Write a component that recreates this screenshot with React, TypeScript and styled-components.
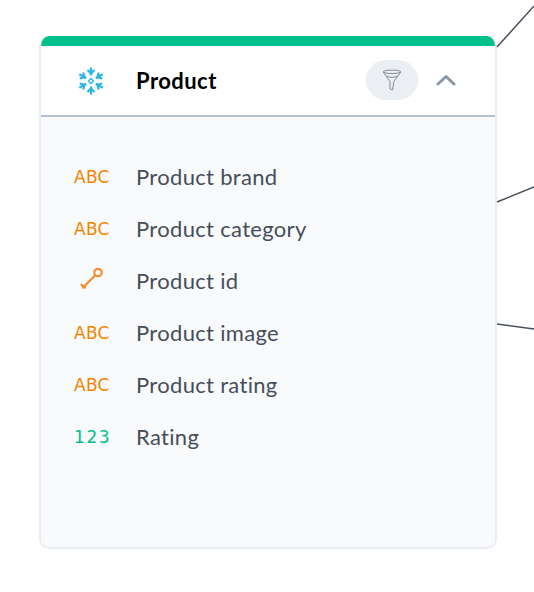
import React from "react";
import styled, { createGlobalStyle } from "styled-components";

const GlobalStyle = createGlobalStyle`
  html, body {
    margin: 0;
    padding: 0;
    background: #ffffff;
    font-family: "Lato", "Open Sans", sans-serif;
  }
`;

const Canvas = styled.div`
  position: relative;
  box-sizing: border-box;
  width: 534px;
  height: 592px;
  padding: 36px 37px 43px 39px;
  overflow: hidden;
`;

const Connectors = styled.svg`
  position: absolute;
  left: 0;
  top: 0;
`;

const Card = styled.section`
  box-sizing: border-box;
  height: 100%;
  display: flex;
  flex-direction: column;
  border: 2px solid #e9ecf1;
  border-top: 0;
  border-radius: 10px;
  background: #ffffff;
  overflow: hidden;
`;

const TopBar = styled.div`
  height: 10px;
  background: #00c08b;
  margin: 0 -2px;
`;

const Header = styled.header`
  box-sizing: border-box;
  height: 71px;
  display: flex;
  align-items: center;
  padding: 0 39px 0 36px;
  border-bottom: 2px solid #b8c1cf;
`;

const LogoSlot = styled.div`
  width: 59px;
  display: flex;
`;

const Title = styled.h2`
  flex: 1;
  margin: 0;
  font-size: 22px;
  font-weight: 700;
  letter-spacing: 0.45px;
  color: #000000;
`;

const FilterButton = styled.button`
  width: 52px;
  height: 40px;
  padding: 0;
  margin: 0 18px 1px 0;
  display: flex;
  align-items: center;
  justify-content: center;
  border: 0;
  border-radius: 20px;
  background: #ebeef2;
`;

const Chevron = styled.svg`
  display: block;
  margin-bottom: 2px;
`;

const Body = styled.ul`
  flex: 1;
  margin: 0;
  padding: 33px 0 0 0;
  list-style: none;
  background: #f8fafc;
`;

const Row = styled.li`
  height: 52px;
  display: flex;
  align-items: center;
`;

const TypeSlot = styled.div`
  width: 95px;
  padding-left: 33px;
  box-sizing: border-box;
  display: flex;
  align-items: center;
`;

const TypeLabel = styled.span<{ $color: string; $spacing: number }>`
  margin-top: 1px;
  font-family: "DejaVu Sans", sans-serif;
  font-size: 17px;
  font-weight: 400;
  letter-spacing: ${({ $spacing }) => $spacing}px;
  color: ${({ $color }) => $color};
`;

const FieldName = styled.span`
  font-size: 22px;
  letter-spacing: 0.32px;
  color: #464e5a;
`;

const SnowflakeIcon = () => (
  <svg width="28" height="28" viewBox="0 0 28 28" fill="none" stroke="#29b5e8" strokeWidth="2.2" strokeLinecap="butt" strokeLinejoin="miter">
    {[0, 60, 120, 180, 240, 300].map((angle) => (
      <g key={angle} transform={`rotate(${angle} 14 14)`}>
        <path d="M14 0.5 L14 8.5" />
        <path d="M10.5 3 L14 6.5 L17.5 3" />
      </g>
    ))}
    <path d="M14 11.5 L16.5 14 L14 16.5 L11.5 14 Z" strokeWidth="1.3" />
  </svg>
);

const FunnelIcon = () => (
  <svg width="20" height="22" viewBox="0 0 20 22" fill="none" stroke="#868e9b" strokeWidth="1" strokeLinejoin="round">
    <ellipse cx="10" cy="2.8" rx="8.8" ry="1.7" />
    <path d="M1.2 3 L8 12.5 L8 20 L10.6 21 L11.8 12.5 L18.8 3" />
    <path d="M4.5 7.5 Q10 9.2 15.5 7.5" />
  </svg>
);

const KeyIcon = () => (
  <svg width="24" height="24" viewBox="0 0 24 24" fill="none" stroke="#f78d32" strokeWidth="2.2" strokeLinecap="round">
    <circle cx="18" cy="4.5" r="3.7" />
    <path d="M15.3 7.2 L3 19.5" />
    <path d="M1.5 17 L5 19.5" />
  </svg>
);

const ORANGE = "#f58400";
const GREEN = "#00c08b";

type Field = {
  name: string;
  type: "text" | "key" | "number";
};

const fields: Field[] = [
  { name: "Product brand", type: "text" },
  { name: "Product category", type: "text" },
  { name: "Product id", type: "key" },
  { name: "Product image", type: "text" },
  { name: "Product rating", type: "text" },
  { name: "Rating", type: "number" },
];

const KeySlot = styled(TypeSlot)`
  padding-left: 39px;
`;

const FieldType = ({ type }: { type: Field["type"] }) => {
  if (type === "key") {
    return (
      <KeySlot>
        <KeyIcon />
      </KeySlot>
    );
  }
  return (
    <TypeSlot>
      {type === "text" ? (
        <TypeLabel $color={ORANGE} $spacing={0.3}>ABC</TypeLabel>
      ) : (
        <TypeLabel $color={GREEN} $spacing={1.6}>123</TypeLabel>
      )}
    </TypeSlot>
  );
};

export default function App() {
  return (
    <>
      <GlobalStyle />
      <Canvas>
        <Connectors width="534" height="592" fill="none" stroke="#474f5b" strokeWidth="1.5">
          <path d="M497 47 L534 6" />
          <path d="M497 202 L534 187" />
          <path d="M497 324 L534 329" />
        </Connectors>
        <Card>
          <TopBar />
          <Header>
            <LogoSlot>
              <SnowflakeIcon />
            </LogoSlot>
            <Title>Product</Title>
            <FilterButton aria-label="Filter">
              <FunnelIcon />
            </FilterButton>
            <Chevron width="20" height="12" viewBox="0 0 20 12" fill="none" stroke="#8c96a3" strokeWidth="3" strokeLinecap="round" strokeLinejoin="round">
              <path d="M2 10 L10 2.5 L18 10" />
            </Chevron>
          </Header>
          <Body>
            {fields.map((field) => (
              <Row key={field.name}>
                <FieldType type={field.type} />
                <FieldName>{field.name}</FieldName>
              </Row>
            ))}
          </Body>
        </Card>
      </Canvas>
    </>
  );
}
